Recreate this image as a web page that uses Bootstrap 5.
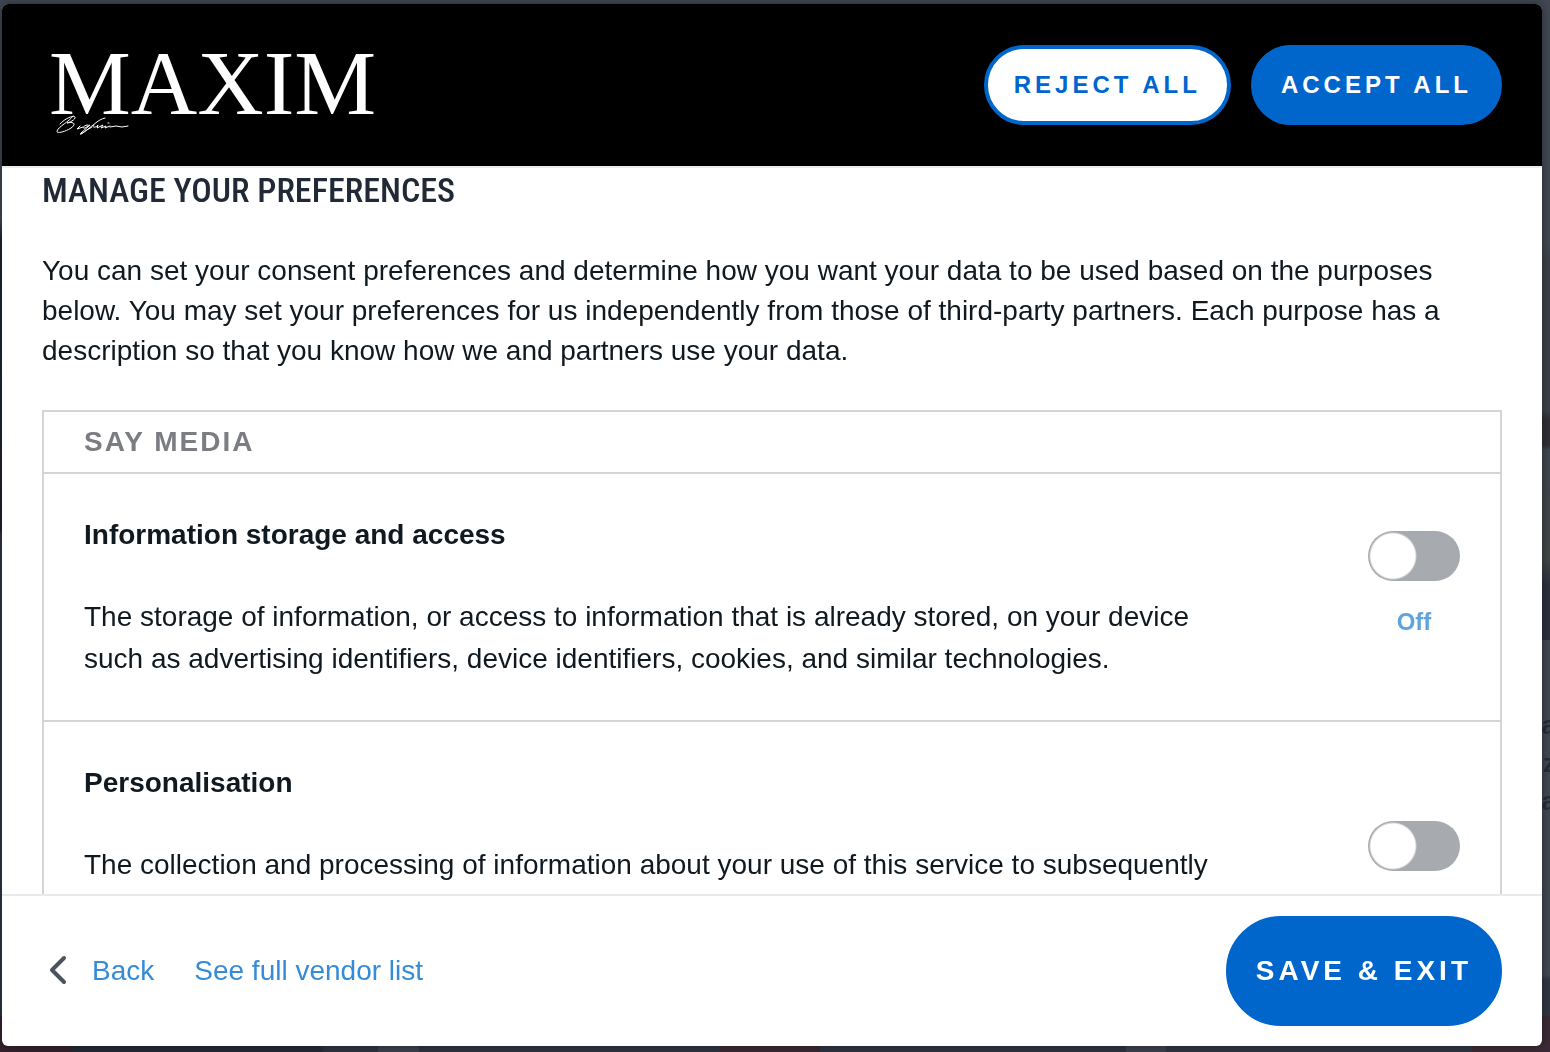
<!DOCTYPE html>
<html lang="en">
<head>
<meta charset="utf-8">
<meta name="viewport" content="width=device-width, initial-scale=1">
<title>Manage your preferences</title>
<link href="https://cdn.jsdelivr.net/npm/bootstrap@5.3.0/dist/css/bootstrap.min.css" rel="stylesheet">
<style>
  :root { --brand: #0066cc; --rule: #d3d4d5; --ink: #101820; }
  body {
    padding: 4px 8px 6px 2px;
    font: 28px/40px "Liberation Sans", Arial, sans-serif;
    color: var(--ink);
    background: #2b3440;
  }
  .backdrop-page { z-index: -1; background: linear-gradient(#414852 0 240px, #3c4149 260px 410px, #2f2f36 420px 445px, #3d454e 450px, #414545 560px, #2b303d 585px 640px, #414852 640px 975px, #2f3642 980px 1015px, #3b2a35 1017px); }
  .backdrop-left { width: 50%; background: linear-gradient(#414852 0 220px, #1b2230 240px, #1b2a38 370px, #231f2a 530px, #2d3544 535px 1015px, #33222e 1017px); }
  .backdrop-foot { height: 12px; background: linear-gradient(90deg, #33222e 0 72px, #232a37 72px 320px, #2b3440 325px 378px, #3a414b 378px 419px, #2b3440 419px 720px, #3a2833 720px 820px, #2b3440 820px 1126px, #3b414c 1126px 1166px, #2f3642 1166px 1472px, #3b2a35 1472px); }
  .backdrop-copy { top: 706px; right: -6px; line-height: 38px; font-size: 26px; font-weight: 700; color: #262d38; white-space: pre; text-align: right; }
  .consent { border-radius: 6px; box-shadow: 0 0 10px rgba(0, 0, 0, .4); }
  .consent-head { padding: 41px 40px; border-bottom: 2px solid #ececec; }
  .wordmark { font: 92px/76px "Liberation Serif", serif; padding-left: 7px; margin-bottom: 4px; }
  .signature { left: 14px; top: 69px; }
  .btn-row { gap: 20px; }
  .btn-consent {
    --bs-btn-font-size: 24px; --bs-btn-font-weight: 700; --bs-btn-line-height: 40px;
    --bs-btn-padding-x: 26px; --bs-btn-padding-y: 16px; --bs-btn-border-width: 4px;
    --bs-btn-color: #fff; --bs-btn-bg: var(--brand); --bs-btn-border-color: var(--brand);
    --bs-btn-hover-color: #fff; --bs-btn-hover-bg: #0058b0; --bs-btn-hover-border-color: #0058b0;
    letter-spacing: 4px;
  }
  .btn-hollow { --bs-btn-color: var(--brand); --bs-btn-bg: #fff; }
  .btn-save { --bs-btn-font-size: 28px; --bs-btn-padding-y: 31px; }
  .consent-body { padding: 0 40px; scrollbar-width: none; }
  .consent-body::-webkit-scrollbar { display: none; }
  .consent-title { font: 500 34px/44px "Roboto Condensed", Roboto, sans-serif; color: #212936; margin-bottom: 39px; }
  .consent-intro { margin-bottom: 39px; }
  .purposes { border: 2px solid var(--rule); line-height: 42px; }
  .purposes-name { font-size: 28px; font-weight: 700; line-height: 60px; letter-spacing: 2px; color: #7b7d82; padding: 0 40px; }
  .purpose { border-top: 2px solid var(--rule); padding: 40px; gap: 140px; }
  .purpose-name { font-size: 28px; font-weight: 700; line-height: 42px; margin-bottom: 40px; }
  .toggle-col { width: 92px; padding-bottom: 20px; }
  .toggle-col .form-check-input {
    width: 92px; height: 50px; margin: 0 0 20px; border: 0; float: none;
    background: radial-gradient(circle at 25px 25px, #fff 22px, #a7aaae 24px);
  }
  .toggle-col .form-check-input:checked { background: radial-gradient(circle at 67px 25px, #fff 22px, var(--brand) 24px); }
  .toggle-label { font-size: 24px; font-weight: 700; color: #5fa3df; }
  .consent-foot { padding: 20px 40px; border-top: 2px solid #e8e9ea; }
  .consent-foot a { color: #368bd6; }
  .foot-links { gap: 40px; }
  .back-link { gap: 18px; }
</style>
<script src="https://cdn.jsdelivr.net/npm/bootstrap@5.3.0/dist/js/bootstrap.bundle.min.js"></script>
</head>
<body class="vh-100 overflow-hidden">
<div class="backdrop-page position-fixed top-0 start-0 w-100 h-100" aria-hidden="true">
  <div class="backdrop-left h-100"></div>
  <div class="backdrop-foot position-absolute bottom-0 start-0 w-100"></div>
  <div class="backdrop-copy position-absolute">a
z
la</div>
</div>
<main class="consent bg-white h-100 d-flex flex-column overflow-hidden">
  <header class="consent-head bg-black d-flex align-items-center justify-content-between">
    <div class="wordmark text-white position-relative">MAXIM
      <svg class="signature position-absolute" width="78" height="24" viewBox="0 0 78 24" fill="none" stroke="#fff" stroke-width="1" stroke-linecap="round" aria-hidden="true">
        <path d="M4 10C9 4 20 0 19 4C18 7 11 9 11 9C19 7 20 11 15 14C9 18 0 20 1 17C3 12 13 8 17 2M24 12L21 15L27 13M32 11C27 11 26 15 29 14L34 11L25 19C22 23 30 16 36 13M49 4C42 5 35 14 25 20M38 11C35 14 40 14 42 11L41 14L47 11L45 14L50 12L49 14L54 12M52 9L53 9M54 13L60 12L66 13L72 12"/>
      </svg>
    </div>
    <div class="btn-row d-flex">
      <button type="button" class="btn btn-consent btn-hollow rounded-pill">REJECT ALL</button>
      <button type="button" class="btn btn-consent rounded-pill">ACCEPT ALL</button>
    </div>
  </header>
  <div class="consent-body flex-grow-1 overflow-auto">
    <h1 class="consent-title">MANAGE YOUR PREFERENCES</h1>
    <p class="consent-intro">You can set your consent preferences and determine how you want your data to be used based on the purposes below. You may set your preferences for us independently from those of third-party partners. Each purpose has a description so that you know how we and partners use your data.</p>
    <section class="purposes">
      <h2 class="purposes-name m-0">SAY MEDIA</h2>
      <div class="purpose d-flex align-items-center">
        <div class="flex-grow-1">
          <h3 class="purpose-name">Information storage and access</h3>
          <p class="m-0">The storage of information, or access to information that is already stored, on your device such as advertising identifiers, device identifiers, cookies, and similar technologies.</p>
        </div>
        <div class="toggle-col form-switch flex-shrink-0 ps-0 d-flex flex-column align-items-center">
          <input class="form-check-input" type="checkbox" role="switch" id="storage">
          <label class="toggle-label" for="storage">Off</label>
        </div>
      </div>
      <div class="purpose d-flex align-items-center">
        <div class="flex-grow-1">
          <h3 class="purpose-name">Personalisation</h3>
          <p class="m-0">The collection and processing of information about your use of this service to subsequently personalise advertising and/or content for you in other contexts, such as on other websites or apps, over time. The content of the site or app is used to make inferences about your interests.</p>
        </div>
        <div class="toggle-col form-switch flex-shrink-0 ps-0 d-flex flex-column align-items-center">
          <input class="form-check-input" type="checkbox" role="switch" id="personal">
          <label class="toggle-label" for="personal">Off</label>
        </div>
      </div>
    </section>
  </div>
  <footer class="consent-foot d-flex align-items-center justify-content-between">
    <nav class="foot-links d-flex align-items-center">
      <a href="#back" class="back-link d-flex align-items-center text-decoration-none">
        <svg width="32" height="32" viewBox="0 0 32 32" fill="none" stroke="#4c535d" stroke-width="4" stroke-linecap="round" stroke-linejoin="round" aria-hidden="true"><path d="M22 3L10 15L22 27"/></svg>Back</a>
      <a href="#vendors" class="text-decoration-none">See full vendor list</a>
    </nav>
    <button type="button" class="btn btn-consent btn-save rounded-pill">SAVE &amp; EXIT</button>
  </footer>
</main>
</body>
</html>
